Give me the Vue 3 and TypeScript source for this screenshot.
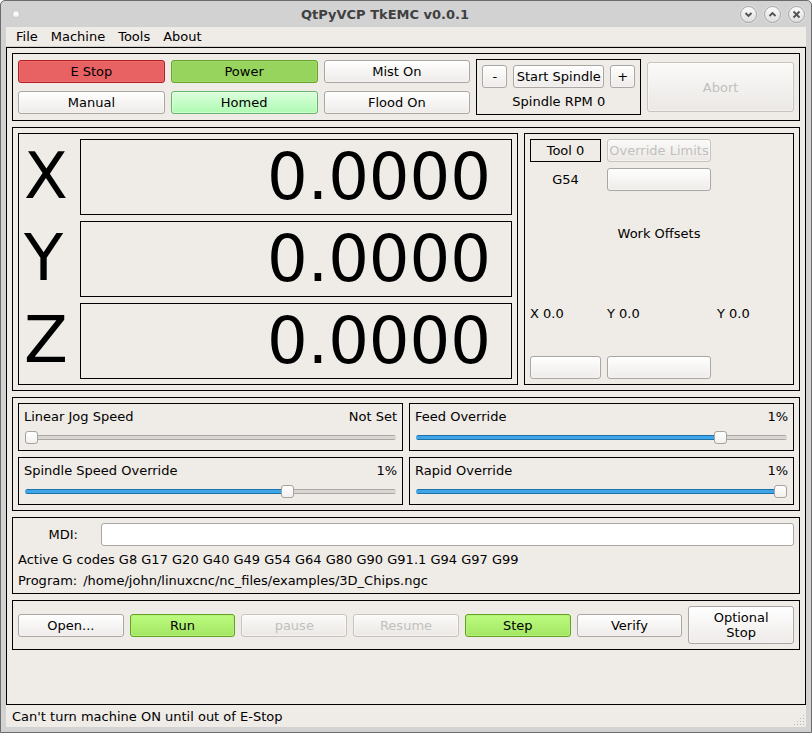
<script setup lang="ts">
import { ref } from 'vue'

interface Slider {
  id: string
  label: string
  readout: string
  value: number
}

interface ProgramAction {
  label: string
  tone?: string
  disabled?: boolean
}

const menus = ['File', 'Machine', 'Tools', 'About']

const axes = [
  { name: 'X', position: '0.0000' },
  { name: 'Y', position: '0.0000' },
  { name: 'Z', position: '0.0000' },
]

const sliders = ref<Slider[]>([
  { id: 'jog', label: 'Linear Jog Speed', readout: 'Not Set', value: 0 },
  { id: 'feed', label: 'Feed Override', readout: '1%', value: 833 },
  { id: 'spindle', label: 'Spindle Speed Override', readout: '1%', value: 715 },
  { id: 'rapid', label: 'Rapid Override', readout: '1%', value: 1000 },
])

const actions: ProgramAction[] = [
  { label: 'Open...' },
  { label: 'Run', tone: 'lime' },
  { label: 'pause', disabled: true },
  { label: 'Resume', disabled: true },
  { label: 'Step', tone: 'lime' },
  { label: 'Verify' },
  { label: 'Optional Stop' },
]

const mdi = ref('')
const gcodes = 'G8 G17 G20 G40 G49 G54 G64 G80 G90 G91.1 G94 G97 G99'
const program = '/home/john/linuxcnc/nc_files/examples/3D_Chips.ngc'
</script>

<template>
  <div class="window">
    <header class="titlebar">
      <span class="dot"></span>
      <h1 class="title">QtPyVCP TkEMC v0.0.1</h1>
      <div class="controls">
        <button class="round" type="button" aria-label="Minimize">
          <svg width="9" height="9" viewBox="0 0 9 9"><path d="M1.5 3 4.5 6 7.5 3" /></svg>
        </button>
        <button class="round" type="button" aria-label="Maximize">
          <svg width="9" height="9" viewBox="0 0 9 9"><path d="M1.5 6 4.5 3 7.5 6" /></svg>
        </button>
        <button class="round" type="button" aria-label="Close">
          <svg width="9" height="9" viewBox="0 0 9 9"><path d="M1.5 1.5 7.5 7.5M7.5 1.5 1.5 7.5" /></svg>
        </button>
      </div>
    </header>

    <div class="client">
      <nav class="menubar">
        <button v-for="menu in menus" :key="menu" class="menu" type="button">{{ menu }}</button>
      </nav>

      <main class="frame central">
        <section class="frame machine">
          <button class="btn red" type="button">E Stop</button>
          <button class="btn green" type="button">Power</button>
          <button class="btn" type="button">Mist On</button>
          <div class="frame spindle">
            <div class="spindle-row">
              <button class="btn step" type="button">-</button>
              <button class="btn start" type="button">Start Spindle</button>
              <button class="btn step" type="button">+</button>
            </div>
            <p class="rpm">Spindle RPM 0</p>
          </div>
          <button class="btn abort" type="button" disabled>Abort</button>
          <button class="btn" type="button">Manual</button>
          <button class="btn mint" type="button">Homed</button>
          <button class="btn" type="button">Flood On</button>
        </section>

        <section class="frame position">
          <div class="frame dro">
            <div v-for="axis in axes" :key="axis.name" class="axis">
              <span class="axis-name">{{ axis.name }}</span>
              <output class="frame axis-value">{{ axis.position }}</output>
            </div>
          </div>
          <div class="frame offsets">
            <span class="frame tool">Tool 0</span>
            <button class="btn" type="button" disabled>Override Limits</button>
            <span class="system">G54</span>
            <button class="btn" type="button" aria-label="Work system"></button>
            <span class="offsets-title">Work Offsets</span>
            <span class="first">X 0.0</span>
            <span>Y 0.0</span>
            <span>Y 0.0</span>
            <button class="btn" type="button" aria-label="Set offset"></button>
            <button class="btn" type="button" aria-label="Clear offset"></button>
          </div>
        </section>

        <section class="frame overrides">
          <div v-for="slider in sliders" :key="slider.id" class="frame override">
            <div class="override-head">
              <label :for="slider.id">{{ slider.label }}</label>
              <span>{{ slider.readout }}</span>
            </div>
            <input
              :id="slider.id"
              v-model.number="slider.value"
              class="slider"
              type="range"
              min="0"
              max="1000"
              :style="{ '--fill': slider.value / 10 + '%' }"
            />
          </div>
        </section>

        <section class="frame program">
          <div class="mdi">
            <label class="mdi-label" for="mdi">MDI:</label>
            <input id="mdi" v-model="mdi" class="mdi-input" type="text" />
          </div>
          <p>Active G codes {{ gcodes }}</p>
          <p class="file"><span>Program:</span><span>{{ program }}</span></p>
        </section>

        <section class="frame actions">
          <button
            v-for="action in actions"
            :key="action.label"
            class="btn action"
            :class="action.tone"
            type="button"
            :disabled="action.disabled"
          >{{ action.label }}</button>
        </section>
      </main>

      <footer class="statusbar">
        <span>Can't turn machine ON until out of E-Stop</span>
        <svg class="grip" width="12" height="12" viewBox="0 0 12 12">
          <path d="M9 0h1v1h-1zM6 3h1v1h-1zM9 3h1v1h-1zM3 6h1v1h-1zM6 6h1v1h-1zM9 6h1v1h-1zM0 9h1v1h-1zM3 9h1v1h-1zM6 9h1v1h-1zM9 9h1v1h-1z" />
        </svg>
      </footer>
    </div>
  </div>
</template>

<style>
body {
  margin: 0;
  background: #ffffff;
}
</style>

<style scoped>
.window,
.window * {
  box-sizing: border-box;
}

.window {
  display: flex;
  flex-direction: column;
  min-height: 100vh;
  padding: 0 5px 5px;
  border: 1px solid #6c6a6c;
  border-radius: 5px 5px 0 0;
  background: #d3d2d3;
  color: #000000;
  font: 13px/15px "DejaVu Sans", sans-serif;
}

button,
input {
  margin: 0;
  font: inherit;
  color: inherit;
}

p,
h1 {
  margin: 0;
}

.titlebar {
  display: flex;
  align-items: center;
  height: 26px;
  padding: 0 1px 0 6px;
}

.dot {
  width: 8px;
  height: 8px;
  border: 1px solid #c4c4c4;
  border-radius: 50%;
  background: #f8f8f8;
}

.title {
  flex: 1;
  padding-left: 10px;
  color: #404040;
  font-size: 13px;
  font-weight: bold;
  text-align: center;
}

.controls {
  display: flex;
  gap: 7px;
}

.round {
  display: flex;
  align-items: center;
  justify-content: center;
  width: 17px;
  height: 17px;
  padding: 0;
  border: 1px solid #a4a4a4;
  border-radius: 50%;
  background: linear-gradient(#fafafa, #dedede);
  box-shadow: 0 0 0 1px #dedede;
}

.round path {
  fill: none;
  stroke: #505050;
  stroke-width: 1.8;
}

.client {
  display: flex;
  flex: 1;
  flex-direction: column;
  background: #efebe7;
}

.menubar {
  display: flex;
  gap: 1px;
  height: 20px;
  padding: 0 4px;
  border-bottom: 1px solid #d2cfcb;
}

.menu {
  padding: 0 6px;
  border: 0;
  background: none;
}

.frame {
  border: 1px solid #000000;
}

.central {
  display: flex;
  flex: 1;
  flex-direction: column;
  gap: 6px;
  padding: 5px;
}

.btn {
  height: 23px;
  padding: 0;
  border: 1px solid #aaa6a3;
  border-radius: 3px;
  background: linear-gradient(#ffffff, #eeebe9);
  box-shadow: inset 0 0 0 1px rgba(255, 255, 255, 0.4);
  text-align: center;
  white-space: nowrap;
}

.btn:disabled {
  border-color: #c6c3c0;
  background: linear-gradient(#fbfaf9, #ebe8e5);
  color: #c1bfbd;
}

.btn.red {
  border-color: #b51c20;
  background: #e86163;
  box-shadow: inset 0 0 0 1px #ec6e70;
}

.btn.green {
  border-color: #66a32b;
  background: #97d45e;
  box-shadow: inset 0 0 0 1px #a0da6c;
}

.btn.mint {
  border-color: #67b56b;
  background: linear-gradient(#dbffdc, #affab2);
}

.btn.lime {
  border-color: #61a220;
  background: linear-gradient(#bcfb7f, #a3e663);
  box-shadow: inset 0 0 0 1px #b6f17c;
}

.machine {
  display: grid;
  grid-template-columns: 1fr 1fr 1fr 165px 1fr;
  grid-template-rows: 25px 25px;
  align-items: center;
  gap: 6px;
  padding: 5px;
}

.spindle {
  display: flex;
  grid-row: 1 / 3;
  grid-column: 4;
  flex-direction: column;
  gap: 6px;
  height: 56px;
  padding: 5px;
}

.spindle-row {
  display: flex;
  gap: 6px;
}

.step {
  width: 25px;
}

.start {
  flex: 1;
}

.rpm {
  text-align: center;
}

.abort {
  grid-row: 1 / 3;
  grid-column: 5;
  height: 50px;
}

.position {
  display: grid;
  grid-template-columns: 1fr 270px;
  gap: 6px;
  padding: 5px;
}

.dro {
  display: flex;
  flex-direction: column;
  gap: 6px;
  padding: 5px;
}

.axis {
  display: flex;
  gap: 6px;
  font-size: 64px;
  line-height: 74px;
}

.axis-name {
  width: 50px;
}

.axis-value {
  flex: 1;
  padding-right: 20px;
  text-align: right;
}

.offsets {
  display: grid;
  grid-template-columns: 71px 104px 1fr;
  grid-template-rows: 23px 23px 1fr 1fr 23px;
  align-items: center;
  gap: 6px;
  padding: 5px;
}

.tool {
  height: 23px;
  padding: 3px 0;
  text-align: center;
}

.system {
  grid-column: 1;
  text-align: center;
}

.offsets-title {
  grid-column: 1 / 4;
  text-align: center;
}

.first {
  grid-column: 1;
}

.overrides {
  display: grid;
  grid-template-columns: 1fr 1fr;
  gap: 6px;
  padding: 5px;
}

.override {
  display: flex;
  flex-direction: column;
  gap: 6px;
  padding: 5px;
}

.override-head {
  display: flex;
  justify-content: space-between;
}

.slider {
  height: 15px;
  margin: 0 1px;
  appearance: none;
  background: none;
}

.slider::-webkit-slider-runnable-track {
  height: 5px;
  border-radius: 3px;
  background:
    linear-gradient(#1f72a8 0 1px, #3fa5e8 1px 4px, #1f72a8 4px) 0 0 / var(--fill) 100% no-repeat,
    linear-gradient(#a9a6a3 0 1px, #d8d5d2 1px 4px, #a9a6a3 4px);
}

.slider::-webkit-slider-thumb {
  width: 13px;
  height: 13px;
  margin-top: -4px;
  appearance: none;
  border: 1px solid #a5a2a0;
  border-radius: 3px;
  background: linear-gradient(#ffffff, #f3f1f0);
}

.program {
  display: flex;
  flex-direction: column;
  gap: 6px;
  padding: 5px;
}

.mdi {
  display: grid;
  grid-template-columns: 77px 1fr;
  align-items: center;
  gap: 6px;
}

.mdi-label {
  padding-right: 17px;
  text-align: right;
}

.mdi-input {
  width: 100%;
  height: 23px;
  padding: 0 4px;
  border: 1px solid #aaa6a3;
  border-radius: 3px;
  background: #ffffff;
}

.file {
  display: flex;
  gap: 6px;
}

.actions {
  display: grid;
  grid-template-columns: repeat(7, 1fr);
  align-items: center;
  gap: 6px;
  padding: 5px;
}

.action {
  height: auto;
  min-height: 23px;
  padding: 3px 16px;
  white-space: normal;
}

.action:last-child {
  min-height: 38px;
}

.statusbar {
  display: flex;
  align-items: center;
  justify-content: space-between;
  height: 22px;
  padding-left: 6px;
}

.grip {
  align-self: flex-end;
  fill: #bab7b4;
}
</style>
